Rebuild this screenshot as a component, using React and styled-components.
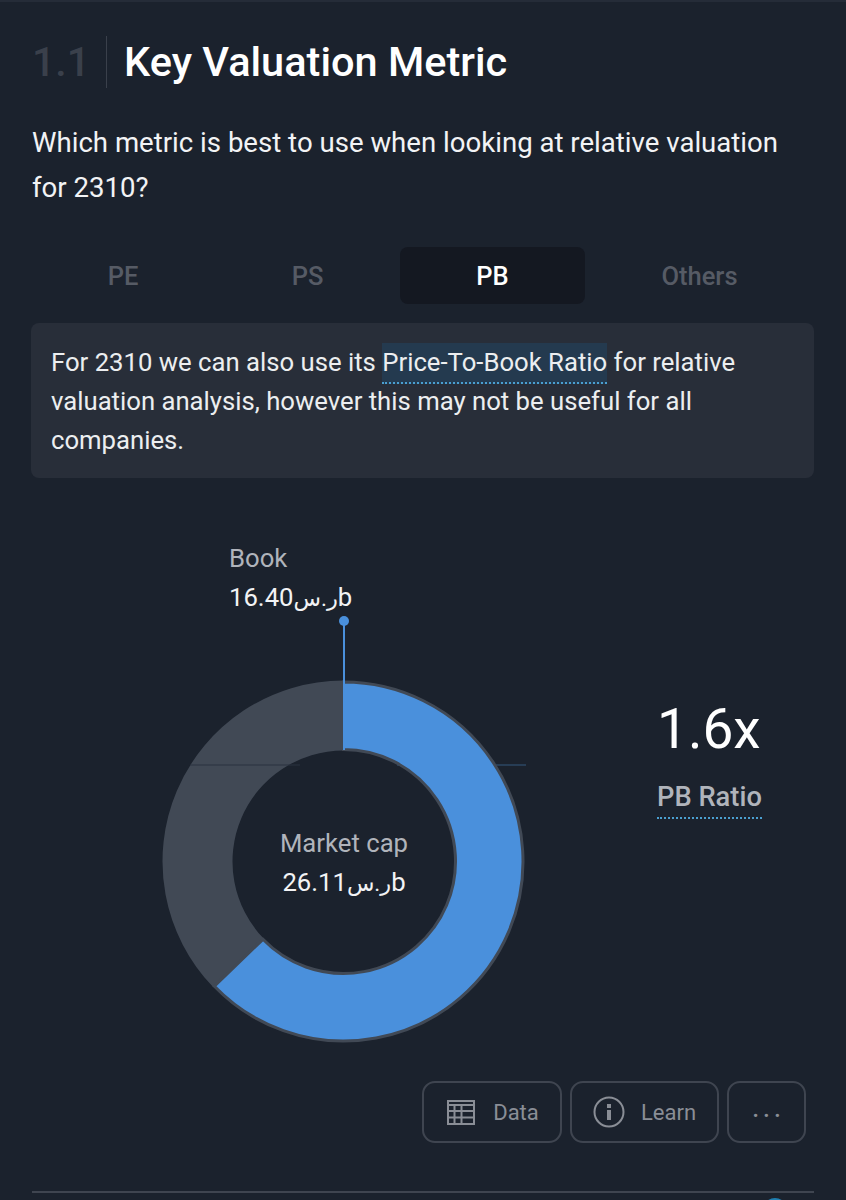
import styled, { createGlobalStyle } from "styled-components";

const GlobalStyle = createGlobalStyle`
  html, body {
    margin: 0;
    background: #1b222d;
  }
  * {
    box-sizing: border-box;
  }
`;

const Page = styled.div`
  width: 846px;
  height: 1200px;
  overflow: hidden;
  padding: 34px 32px 0;
  border-top: 2px solid #252c38;
  background: #1b222d;
  color: #fff;
  font-family: Roboto, "DejaVu Sans", sans-serif;
`;
const Header = styled.div`
  display: flex;
  align-items: center;
  height: 52px;
`;
const SectionNo = styled.div`
  width: 75px;
  height: 52px;
  line-height: 52px;
  font-size: 41px;
  font-weight: 500;
  color: #3a404b;
  border-right: 1px solid #3a404b;
`;
const Title = styled.h1`
  margin: 0 0 0 17px;
  font-size: 41.5px;
  line-height: 52px;
  font-weight: 500;
  color: #fff;
`;
const Question = styled.p`
  margin: 32px 0 0;
  max-width: 760px;
  font-size: 27.6px;
  line-height: 45px;
  color: #f2f3f5;
`;
const Tabs = styled.div`
  display: grid;
  grid-template-columns: 184px 185px 185px 1fr;
  margin: 37px 0 0 -1px;
  height: 57px;
`;
const Tab = styled.div`
  display: flex;
  align-items: center;
  justify-content: center;
  border-radius: 8px;
  font-size: 25.5px;
  font-weight: 500;
  color: ${(p) => (p.$active ? "#fff" : "#565b65")};
  background: ${(p) => (p.$active ? "#141821" : "transparent")};
`;
const Callout = styled.div`
  margin: 19px 0 0 -1px;
  height: 155px;
  padding: 20px 20px 0;
  border-radius: 8px;
  background: #282e39;
  font-size: 25.7px;
  line-height: 39px;
  color: #eceef0;
`;
const Term = styled.span`
  padding: 4px 0 5px;
  background: #243a4f;
  border-bottom: 2px dotted #4a9fd0;
`;
const ChartRow = styled.div`
  display: flex;
  height: 603px;
`;
const ChartBox = styled.div`
  position: relative;
  width: 625px;
  flex: none;
`;
const ChartSvg = styled.svg`
  display: block;
  margin-left: 68px;
`;
const BookLabel = styled.div`
  position: absolute;
  left: 197px;
  top: 61px;
  font-size: 25.7px;
  line-height: 39px;
  color: #b0b4bb;
`;
const CenterLabel = styled.div`
  position: absolute;
  left: 112px;
  width: 400px;
  top: 346px;
  text-align: center;
  font-size: 25.7px;
  line-height: 39px;
  color: #b0b4bb;
`;
const Amount = styled.div`
  color: #f2f3f5;
`;
const Currency = styled.span`
  font-size: 22.5px;
`;
const Stat = styled.div`
  padding-top: 215px;
`;
const StatValue = styled.div`
  font-size: 55px;
  line-height: 72px;
  color: #fff;
`;
const StatLabel = styled.div`
  display: inline-block;
  margin-top: 16px;
  padding-bottom: 4px;
  font-size: 27.3px;
  line-height: 32px;
  font-weight: 500;
  color: #b0b4bb;
  border-bottom: 2px dotted #4a9fd0;
`;
const Actions = styled.div`
  display: flex;
  justify-content: flex-end;
  gap: 8px;
  padding-right: 8px;
`;
const ActionButton = styled.div`
  display: flex;
  align-items: center;
  justify-content: center;
  gap: ${(p) => p.$gap || 0}px;
  width: ${(p) => p.$width}px;
  height: 62px;
  padding-left: ${(p) => p.$inset || 0}px;
  border: 2px solid #3f4550;
  border-radius: 13px;
  font-size: 22px;
  color: #8a8e96;
`;
const MoreDots = styled.span`
  margin: 6px -3px 0 0;
  font-size: 30px;
  letter-spacing: 3px;
`;
const Divider = styled.div`
  margin-top: 48px;
  border-top: 2px solid #3f4550;
`;
const PeekDot = styled.div`
  width: 24px;
  height: 24px;
  margin: 5px 27px 0 auto;
  border-radius: 50%;
  background: #1f7fb0;
`;

const cx = 243.5;
const cy = 383.5;

// point on a circle, degrees clockwise from 12 o'clock
const polar = (r, deg) => {
  const a = (deg * Math.PI) / 180;
  return [cx + r * Math.sin(a), cy - r * Math.cos(a)];
};

const arcPath = (outer, inner, from, to) => {
  const [x1, y1] = polar(outer, from);
  const [x2, y2] = polar(outer, to);
  const [x3, y3] = polar(inner, to);
  const [x4, y4] = polar(inner, from);
  const large = to - from > 180 ? 1 : 0;
  return `M${x1} ${y1}A${outer} ${outer} 0 ${large} 1 ${x2} ${y2}L${x3} ${y3}A${inner} ${inner} 0 ${large} 0 ${x4} ${y4}Z`;
};

const Donut = () => (
  <ChartSvg width="525" height="603" viewBox="0 0 525 603">
    <path d={arcPath(181, 111, 226, 360)} fill="#414955" />
    <line x1="90" y1="287" x2="200" y2="287" stroke="#2a3240" strokeWidth="1" />
    <line x1="297" y1="287" x2="426" y2="287" stroke="#35587f" strokeWidth="1" />
    <path d={arcPath(179.5, 112, 0, 226)} fill="#4a90dc" stroke="#414955" strokeWidth="3" />
    <line x1="244" y1="143" x2="244" y2="272" stroke="#4a90dc" strokeWidth="2" />
    <circle cx="244" cy="143" r="5" fill="#4a90dc" />
  </ChartSvg>
);

const TableIcon = () => (
  <svg width="28" height="25" viewBox="0 0 28 25" fill="none" stroke="#8a8e96" strokeWidth="2">
    <rect x="1" y="1" width="26" height="23" />
    <path d="M1 5h26M1 11h26M1 17.5h26M7.5 5V24M14.5 5V24" />
  </svg>
);

const InfoIcon = () => (
  <svg width="32" height="32" viewBox="0 0 32 32" fill="none">
    <circle cx="16" cy="16" r="14.5" stroke="#8a8e96" strokeWidth="2" />
    <rect x="14" y="14" width="4" height="10" fill="#8a8e96" />
    <rect x="14" y="8" width="4" height="4" fill="#8a8e96" />
  </svg>
);

const App = () => (
  <Page>
    <GlobalStyle />
    <Header>
      <SectionNo>1.1</SectionNo>
      <Title>Key Valuation Metric</Title>
    </Header>
    <Question>
      Which metric is best to use when looking at relative valuation for 2310?
    </Question>
    <Tabs>
      <Tab>PE</Tab>
      <Tab>PS</Tab>
      <Tab $active>PB</Tab>
      <Tab>Others</Tab>
    </Tabs>
    <Callout>
      For 2310 we can also use its <Term>Price-To-Book Ratio</Term> for relative
      valuation analysis, however this may not be useful for all companies.
    </Callout>
    <ChartRow>
      <ChartBox>
        <Donut />
        <BookLabel>
          Book
          <Amount>
            16.40<Currency>ر.س</Currency>b
          </Amount>
        </BookLabel>
        <CenterLabel>
          Market cap
          <Amount>
            26.11<Currency>ر.س</Currency>b
          </Amount>
        </CenterLabel>
      </ChartBox>
      <Stat>
        <StatValue>1.6x</StatValue>
        <StatLabel>PB Ratio</StatLabel>
      </Stat>
    </ChartRow>
    <Actions>
      <ActionButton $width={140} $gap={18} $inset={2}>
        <TableIcon />
        Data
      </ActionButton>
      <ActionButton $width={149} $gap={16}>
        <InfoIcon />
        Learn
      </ActionButton>
      <ActionButton $width={79}>
        <MoreDots>···</MoreDots>
      </ActionButton>
    </Actions>
    <Divider />
    <PeekDot />
  </Page>
);

export default App;
